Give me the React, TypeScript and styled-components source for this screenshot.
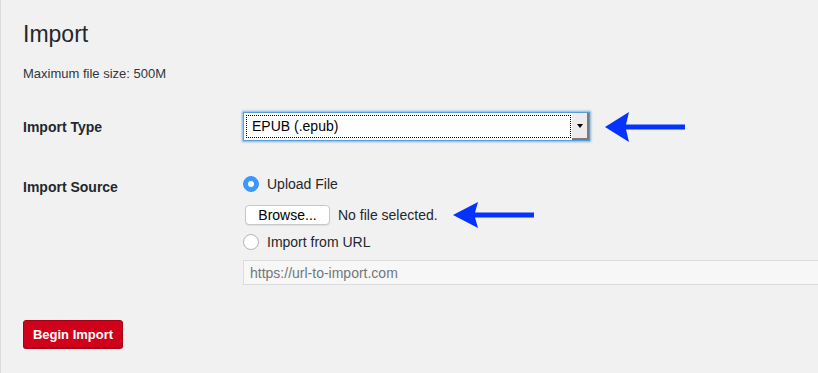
import React from 'react';
import styled, { createGlobalStyle } from 'styled-components';

const GlobalStyle = createGlobalStyle`
  html, body {
    margin: 0;
    padding: 0;
    background: #f1f1f1;
  }
  body {
    font-family: "Liberation Sans", Arial, sans-serif;
    color: #23282d;
    overflow: hidden;
  }
`;

interface ArrowProps {
  width: number;
  height: number;
  head: number;
}

function BlueArrow({ width, height, head }: ArrowProps) {
  const mid = height / 2;
  const shaft = 2.6;
  return (
    <ArrowSvg width={width} height={height} viewBox={`0 0 ${width} ${height}`}>
      <polygon
        fill="#0433ff"
        points={[
          `0,${mid}`,
          `${head},0`,
          `${head - 3},${mid - shaft}`,
          `${width},${mid - shaft}`,
          `${width},${mid + shaft}`,
          `${head - 3},${mid + shaft}`,
          `${head},${height}`,
        ].join(' ')}
      />
    </ArrowSvg>
  );
}

interface RadioProps {
  checked?: boolean;
  label: string;
}

function RadioOption({ checked, label }: RadioProps) {
  return (
    <OptionRow>
      <RadioDot checked={checked} />
      <OptionText>{label}</OptionText>
    </OptionRow>
  );
}

export default function App() {
  return (
    <>
      <GlobalStyle />
      <Page>
        <Title>Import</Title>
        <Note>Maximum file size: 500M</Note>
        <FormTable>
          <Label>Import Type</Label>
          <FieldRow>
            <SelectBox>
              <SelectValue>EPUB (.epub)</SelectValue>
              <SelectToggle>
                <Caret />
              </SelectToggle>
            </SelectBox>
            <ArrowSlot gap={15}>
              <BlueArrow width={80} height={30} head={24} />
            </ArrowSlot>
          </FieldRow>

          <Label offset={3}>Import Source</Label>
          <Options>
            <RadioOption checked label="Upload File" />
            <FileRow>
              <BrowseButton>Browse...</BrowseButton>
              <FileStatus>No file selected.</FileStatus>
              <ArrowSlot gap={15}>
                <BlueArrow width={81} height={26} head={25} />
              </ArrowSlot>
            </FileRow>
            <RadioOption label="Import from URL" />
            <UrlInput placeholder="https://url-to-import.com" />
          </Options>
        </FormTable>
        <SubmitButton>Begin Import</SubmitButton>
      </Page>
    </>
  );
}

const Page = styled.div`
  box-sizing: border-box;
  min-height: 373px;
  padding: 20px 0 0 22px;
  border-left: 1px solid #dcdcdc;
`;

const Title = styled.h1`
  margin: 0;
  font-size: 23px;
  line-height: 29px;
  font-weight: 400;
  color: #23282d;
`;

const Note = styled.p`
  margin: 16px 0 0;
  font-size: 13px;
  line-height: 18px;
  color: #32373c;
`;

const FormTable = styled.div`
  display: grid;
  grid-template-columns: 220px 1fr;
  row-gap: 34px;
  margin-top: 29px;
  align-items: start;
`;

const Label = styled.div<{ offset?: number }>`
  font-size: 14px;
  line-height: 18px;
  font-weight: 700;
  color: #23282d;
  align-self: ${({ offset }) => (offset ? 'start' : 'center')};
  padding-top: ${({ offset }) => offset ?? 0}px;
`;

const FieldRow = styled.div`
  display: flex;
  align-items: center;
`;

const SelectBox = styled.div`
  box-sizing: border-box;
  width: 347px;
  height: 29px;
  display: flex;
  background: #fff;
  border: 1px solid #5b9dd9;
  box-shadow: 0 0 2px 1px rgba(91, 157, 217, 0.75);
  padding: 2px 0 2px 2px;
`;

const SelectValue = styled.div`
  flex: 1;
  box-sizing: border-box;
  border: 1px dotted #000;
  padding-left: 5px;
  font-size: 14px;
  line-height: 21px;
  color: #000;
`;

const SelectToggle = styled.div`
  width: 15px;
  margin: -2px 0 -2px 1px;
  background: #ececec;
  border-right: 2px solid #7a7a7a;
  border-bottom: 2px solid #7a7a7a;
  display: flex;
  align-items: center;
  justify-content: center;
`;

const Caret = styled.span`
  width: 0;
  height: 0;
  border-left: 3px solid transparent;
  border-right: 3px solid transparent;
  border-top: 4px solid #000;
`;

/* arrows are annotations: keep them from stretching the row */
const ArrowSlot = styled.div<{ gap: number }>`
  display: flex;
  align-items: center;
  height: 18px;
  margin-left: ${({ gap }) => gap}px;
`;

const ArrowSvg = styled.svg`
  display: block;
  flex-shrink: 0;
`;

const Options = styled.div`
  display: flex;
  flex-direction: column;
  align-items: flex-start;
`;

const OptionRow = styled.div`
  display: flex;
  align-items: center;
  height: 18px;
`;

const RadioDot = styled.span<{ checked?: boolean }>`
  box-sizing: border-box;
  width: 16px;
  height: 16px;
  border-radius: 50%;
  display: flex;
  align-items: center;
  justify-content: center;
  background: ${({ checked }) => (checked ? '#3b99fc' : '#fff')};
  border: 1px solid ${({ checked }) => (checked ? '#3b99fc' : '#b5b5b5')};
  &::after {
    content: '';
    width: 6px;
    height: 6px;
    border-radius: 50%;
    background: #fff;
    display: ${({ checked }) => (checked ? 'block' : 'none')};
  }
`;

const OptionText = styled.span`
  margin-left: 8px;
  font-size: 14px;
  line-height: 18px;
  color: #23282d;
`;

const FileRow = styled.div`
  display: flex;
  align-items: center;
  height: 20px;
  margin: 12px 0 8px 2px;
`;

const BrowseButton = styled.button`
  box-sizing: border-box;
  width: 85px;
  height: 20px;
  padding: 0;
  background: #fff;
  border: 1px solid #c8c8c8;
  border-radius: 4px;
  box-shadow: 0 1px 1px rgba(0, 0, 0, 0.08);
  font-family: inherit;
  font-size: 14px;
  color: #000;
`;

const FileStatus = styled.span`
  margin-left: 8px;
  font-size: 14px;
  color: #23282d;
`;

const UrlInput = styled.input`
  box-sizing: border-box;
  width: 600px;
  height: 25px;
  margin-top: 9px;
  padding: 0 6px;
  background: #f7f7f7;
  border: 1px solid #dcdcdc;
  font-family: inherit;
  font-size: 14px;
  color: #555;
  &::placeholder {
    color: #72777c;
  }
`;

const SubmitButton = styled.button`
  box-sizing: border-box;
  display: block;
  width: 100px;
  height: 28px;
  margin-top: 35px;
  padding: 0;
  background: #d0021b;
  border: 1px solid #a50217;
  border-radius: 3px;
  box-shadow: 0 1px 0 #a50217;
  font-family: inherit;
  font-size: 13px;
  font-weight: 700;
  color: #fff;
`;
